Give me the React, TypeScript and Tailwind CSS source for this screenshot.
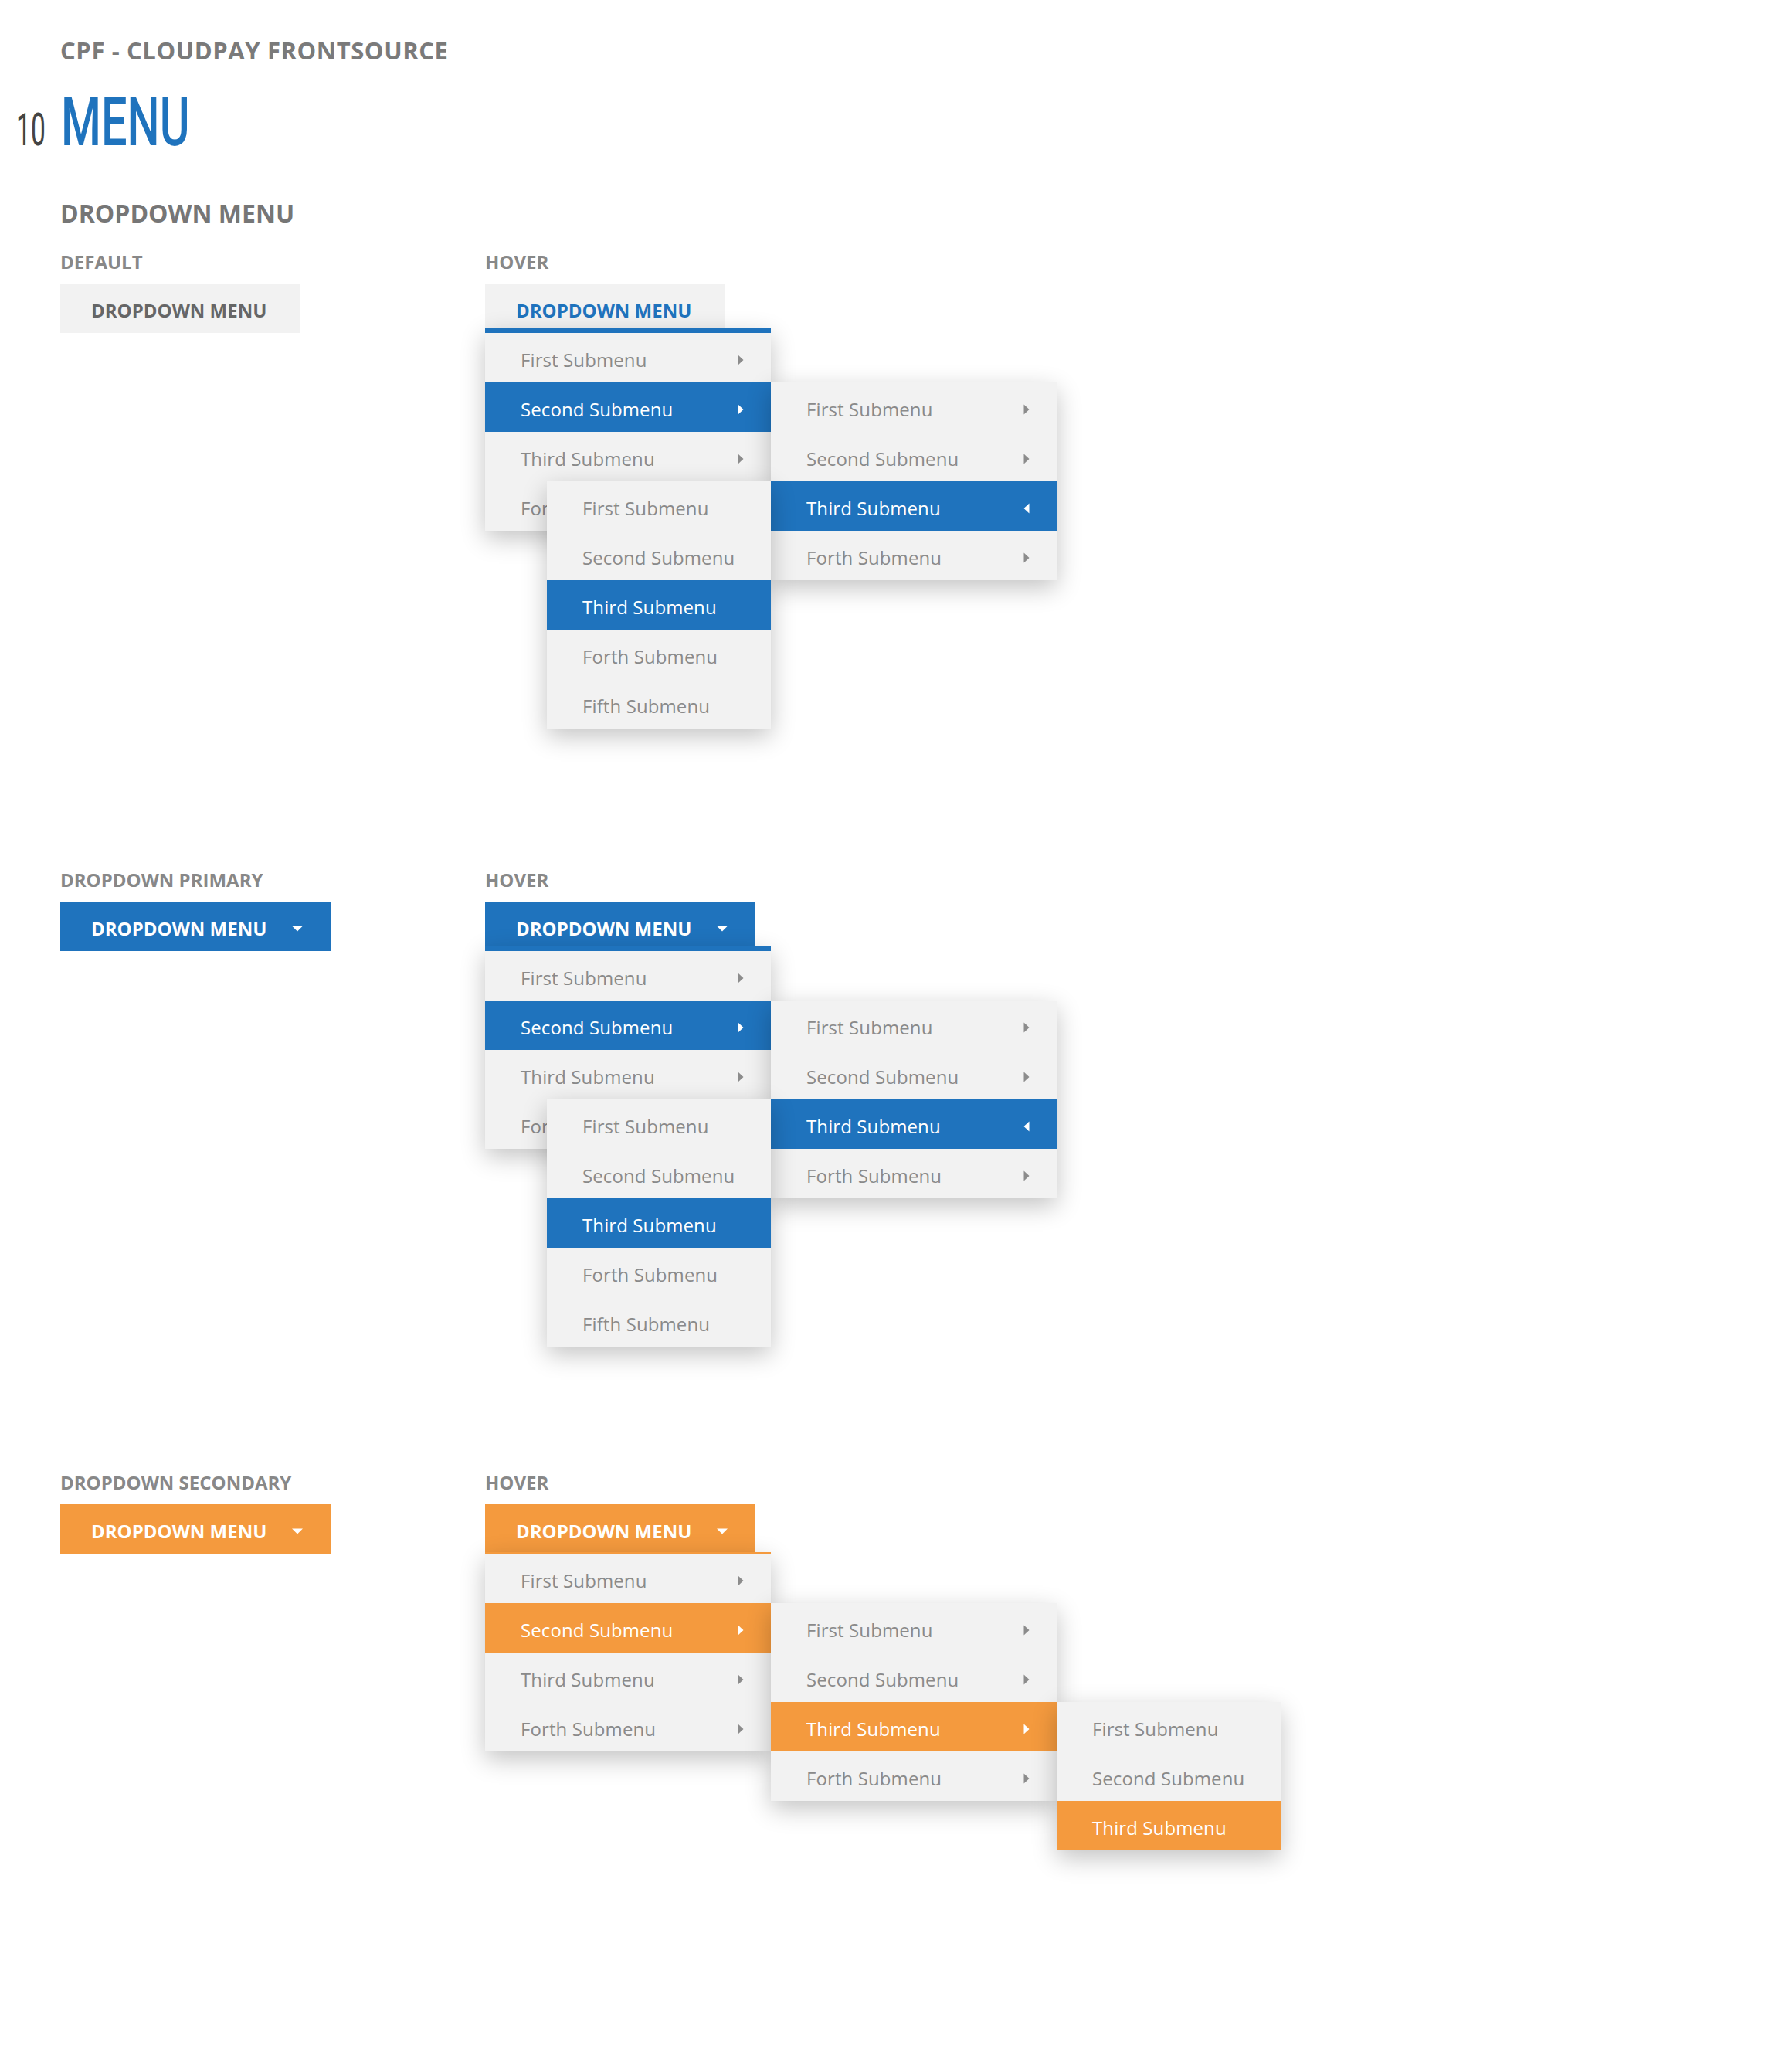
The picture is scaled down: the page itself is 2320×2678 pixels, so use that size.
import React from "react";

type Accent = "blue" | "orange";

const activeBg: Record<Accent, string> = {
  blue: "bg-[#1f73bd]",
  orange: "bg-[#f49a3e]",
};

function Arrow({ dir, white }: { dir: "right" | "left"; white: boolean }) {
  return (
    <svg width="8" height="14" viewBox="0 0 8 14" className={white ? "fill-white" : "fill-[#8c8c8c]"}>
      {dir === "right" ? <path d="M0.5 0.5 L7.5 7 L0.5 13.5 Z" /> : <path d="M7.5 0.5 L0.5 7 L7.5 13.5 Z" />}
    </svg>
  );
}

function Caret() {
  return (
    <svg width="14" height="8" viewBox="0 0 14 8" className="ml-[33px] fill-white">
      <path d="M0 0.5 L14 0.5 L7 7.5 Z" />
    </svg>
  );
}

function Item({
  label,
  active = false,
  arrow,
  accent,
}: {
  label: string;
  active?: boolean;
  arrow?: "right" | "left";
  accent: Accent;
}) {
  return (
    <div
      className={
        "flex h-[64px] items-center justify-between pl-[46px] pr-[35px] pt-[5px] text-[24px] tracking-[0.1px] " +
        (active ? activeBg[accent] + " text-white" : "text-[#8a8a8a]")
      }
    >
      <span className="whitespace-nowrap">{label}</span>
      {arrow ? <Arrow dir={arrow} white={active} /> : null}
    </div>
  );
}

const panel = "absolute bg-[#f2f2f2] shadow-[0_10px_30px_rgba(0,0,0,0.24)]";

function Label({ children }: { children: React.ReactNode }) {
  return <div className="text-[24px] font-bold leading-[24px] text-[#888888]">{children}</div>;
}

function DeepMenus({ accent, topOffset }: { accent: Accent; topOffset: string }) {
  const lineCls = accent === "blue" ? "border-t-[6px] border-[#1f73bd]" : "border-t-[2px] border-[#f49a3e]";
  return (
    <>
      <div className={panel + " left-0 z-10 w-[370px] " + topOffset + " " + lineCls}>
        <Item label="First Submenu" arrow="right" accent={accent} />
        <Item label="Second Submenu" arrow="right" active accent={accent} />
        <Item label="Third Submenu" arrow="right" accent={accent} />
        <Item label="Forth Submenu" arrow="right" accent={accent} />
      </div>
      <div className={panel + " left-[370px] top-[128px] z-20 w-[370px]"}>
        <Item label="First Submenu" arrow="right" accent={accent} />
        <Item label="Second Submenu" arrow="right" accent={accent} />
        <Item label="Third Submenu" arrow={accent === "blue" ? "left" : "right"} active accent={accent} />
        <Item label="Forth Submenu" arrow="right" accent={accent} />
      </div>
      {accent === "blue" ? (
        <div className={panel + " left-[80px] top-[256px] z-30 w-[290px]"}>
          <Item label="First Submenu" accent={accent} />
          <Item label="Second Submenu" accent={accent} />
          <Item label="Third Submenu" active accent={accent} />
          <Item label="Forth Submenu" accent={accent} />
          <Item label="Fifth Submenu" accent={accent} />
        </div>
      ) : (
        <div className={panel + " left-[740px] top-[256px] z-30 w-[290px]"}>
          <Item label="First Submenu" accent={accent} />
          <Item label="Second Submenu" accent={accent} />
          <Item label="Third Submenu" active accent={accent} />
        </div>
      )}
    </>
  );
}

const btnBase = "flex h-[64px] items-center pl-[40px] pt-[5px] text-[24px] font-bold";

export default function App() {
  return (
    <div className="min-h-[2678px] w-[2320px] bg-white font-['Open_Sans',sans-serif]">
      <div className="pl-[78px] pt-[50px] text-[31px] font-bold leading-[31px] tracking-[0.6px] text-[#7a7a7a]">
        CPF - CLOUDPAY FRONTSOURCE
      </div>

      <div className="mt-[33px] flex h-[88px] items-baseline pl-[21px] font-['Roboto',sans-serif] leading-none">
        <span className="inline-block w-[37px] origin-left scale-x-[0.56] text-[60px] font-normal text-[#444444]">
          10
        </span>
        <span className="ml-[21px] inline-block origin-left scale-x-[0.675] text-[88px] font-medium text-[#1f73bd]">
          MENU
        </span>
      </div>

      <div className="mt-[58px] pl-[78px] text-[32px] font-bold leading-[32px] text-[#767676]">DROPDOWN MENU</div>

      {/* Section 1 */}
      <div className="mt-[35px] grid h-[800px] grid-cols-[550px_1fr] pl-[78px]">
        <div>
          <Label>DEFAULT</Label>
          <div className={btnBase + " mt-4 w-[310px] bg-[#f2f2f2] text-[#666666]"}>DROPDOWN MENU</div>
        </div>
        <div>
          <Label>HOVER</Label>
          <div className="relative mt-4 w-[370px]">
            <div className={btnBase + " w-[310px] bg-[#f2f2f2] text-[#1f73bd]"}>DROPDOWN MENU</div>
            <DeepMenus accent="blue" topOffset="top-[58px]" />
          </div>
        </div>
      </div>

      {/* Section 2 */}
      <div className="grid h-[780px] grid-cols-[550px_1fr] pl-[78px]">
        <div>
          <Label>DROPDOWN PRIMARY</Label>
          <div className={btnBase + " mt-4 w-[350px] bg-[#1f73bd] text-white"}>
            <span>DROPDOWN MENU</span>
            <Caret />
          </div>
        </div>
        <div>
          <Label>HOVER</Label>
          <div className="relative mt-4 w-[370px]">
            <div className={btnBase + " w-[350px] bg-[#1f73bd] text-white"}>
              <span>DROPDOWN MENU</span>
              <Caret />
            </div>
            <DeepMenus accent="blue" topOffset="top-[58px]" />
          </div>
        </div>
      </div>

      {/* Section 3 */}
      <div className="grid h-[770px] grid-cols-[550px_1fr] pl-[78px]">
        <div>
          <Label>DROPDOWN SECONDARY</Label>
          <div className={btnBase + " mt-4 w-[350px] bg-[#f49a3e] text-white"}>
            <span>DROPDOWN MENU</span>
            <Caret />
          </div>
        </div>
        <div>
          <Label>HOVER</Label>
          <div className="relative mt-4 w-[370px]">
            <div className={btnBase + " w-[350px] bg-[#f49a3e] text-white"}>
              <span>DROPDOWN MENU</span>
              <Caret />
            </div>
            <DeepMenus accent="orange" topOffset="top-[62px]" />
          </div>
        </div>
      </div>
    </div>
  );
}
